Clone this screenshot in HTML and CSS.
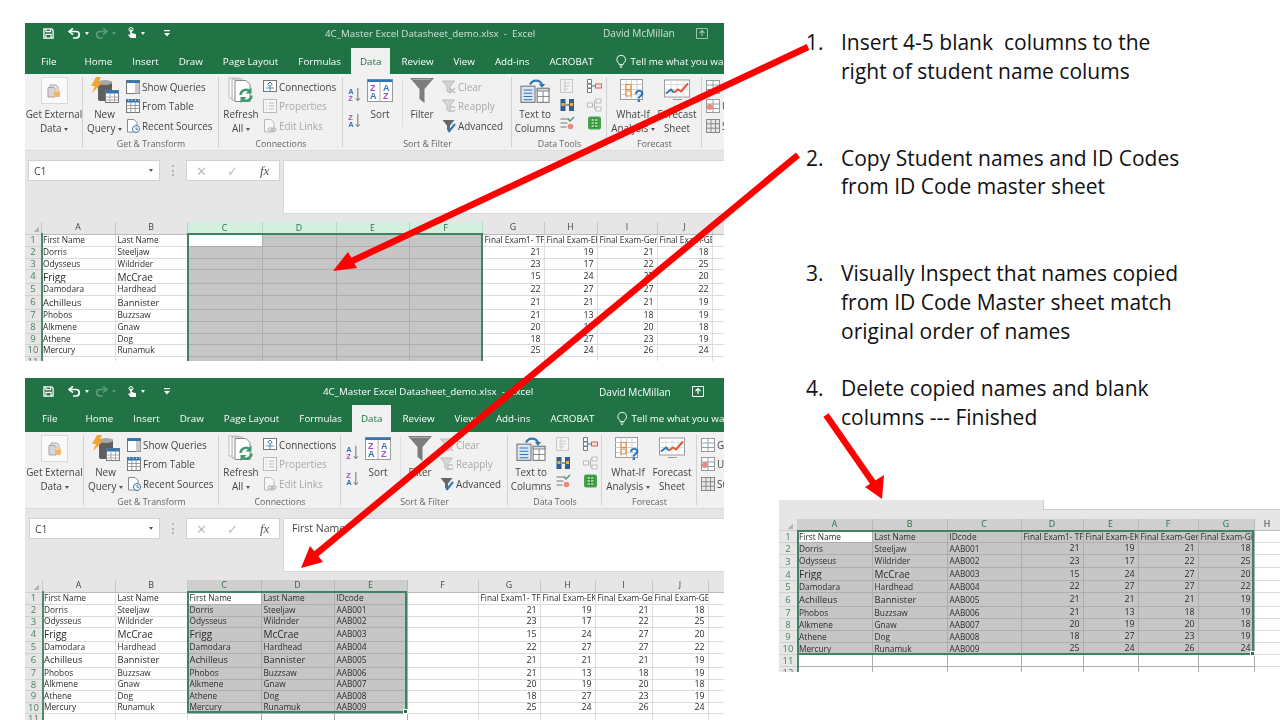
FILE: index.html
```html
<!DOCTYPE html>
<html lang="en">
<head>
<meta charset="utf-8">
<title>Merging ID codes in Excel</title>
<link rel="stylesheet" href="styles.css">
</head>
<body>
<svg class="defs" aria-hidden="true">
  <symbol id="i-save" viewBox="0 0 12 12"><path d="M1 1h8.5L11 2.5V11H1z" fill="none" stroke="#fff" stroke-width="1.4"/><path d="M3.2 1v3h5V1M3.2 11V7h5.6v4" fill="none" stroke="#fff" stroke-width="1.3"/></symbol>
  <symbol id="i-undo" viewBox="0 0 13 11"><path d="M1.5 3.5h6.5a3 3 0 0 1 0 6.5H5" fill="none" stroke="#fff" stroke-width="1.7"/><path d="M5 .3 1 3.5 5 6.7" fill="none" stroke="#fff" stroke-width="1.6"/></symbol>
  <symbol id="i-redo" viewBox="0 0 13 11"><path d="M11.5 3.5H5a3 3 0 0 0 0 6.5h3" fill="none" stroke="#5f9c7c" stroke-width="1.7"/><path d="M8 .3l4 3.2-4 3.2" fill="none" stroke="#5f9c7c" stroke-width="1.6"/></symbol>
  <symbol id="i-touch" viewBox="0 0 10 12"><circle cx="4" cy="2.5" r="2" fill="none" stroke="#fff"/><path d="M3.2 2.5h1.600v3.600L9 7.200V11H3.500L1 8l1-.8 1.200 1z" fill="#fff"/></symbol>
  <symbol id="i-more" viewBox="0 0 6 7"><path d="M0 0h6v1.300H0zM0 3h6L3 6.500z" fill="#fff"/></symbol>
  <symbol id="i-share" viewBox="0 0 12 11"><path d="M.5.500h11v10H.500z" fill="none" stroke="#fff"/><path d="M6 8V3M3.500 5 6 2.500 8.500 5" fill="none" stroke="#fff" stroke-width="1.200"/></symbol>
  <symbol id="i-bulb" viewBox="0 0 11 15"><path d="M5.500.700a4.700 4.700 0 0 0-2.700 8.500c.5.400.7 1 .7 1.700h4.400c0-.7.200-1.300.7-1.700A4.700 4.700 0 0 0 5.500.700zM3.800 12.400h3.400M4.500 14h2" fill="none" stroke="#fff"/></symbol>
  <symbol id="i-ext" viewBox="0 0 14 15"><path d="M3 2h6l2 2v4H3z" fill="#e3e3e3" stroke="#aaa"/><path d="M1 4.500h6l1 1V14H1z" fill="#d6d6d6" stroke="#a5a5a5"/><rect x="7" y="7" width="6" height="7" rx="1.500" fill="#f0b56a"/><ellipse cx="10" cy="7.500" rx="3" ry="1.300" fill="#f7d5a5"/></symbol>
  <symbol id="i-query" viewBox="0 0 30 27"><rect x="8" y="4" width="14" height="20" rx="2" fill="#5f5f5f"/><ellipse cx="15" cy="5.500" rx="7" ry="2.500" fill="#a8a8a8"/><path d="M6 0h5L8 6h4L2 16l3-7H1z" fill="#f1a62b"/><rect x="15.500" y="13.500" width="13" height="12" fill="#fff" stroke="#777"/><path d="M15.500 13.500h13v3h-13z" fill="#2f76b5"/><path d="M15.500 20h13M15.500 23h13M20 16.500v9M24.500 16.500v9" stroke="#999" stroke-width=".8"/></symbol>
  <symbol id="i-show" viewBox="0 0 14 14"><rect x=".5" y=".5" width="13" height="13" fill="#fff" stroke="#777"/><path d="M.5.500h13v2.500H.500z" fill="#2f76b5"/><path d="M9 3h4.500v10.500H9z" fill="#c9c9c9"/></symbol>
  <symbol id="i-table" viewBox="0 0 14 14"><rect x=".5" y=".5" width="13" height="13" fill="#fff" stroke="#777"/><path d="M.5.500h13v3H.500z" fill="#2f76b5"/><path d="M.5 6.500h13M.5 9.500h13M4.800 3v10.500M9.200 3v10.500" stroke="#888" stroke-width=".8"/><path d="M2 1.200h1M5.500 1.200h1M9 1.200h1M12 1.200h1" stroke="#fff"/></symbol>
  <symbol id="i-recent" viewBox="0 0 14 14"><path d="M1.500.500h6.500l3 3V13h-9.500z" fill="#fff" stroke="#888"/><circle cx="10" cy="10" r="3.500" fill="#fff" stroke="#2f76b5"/><path d="M10 8v2.200h2" fill="none" stroke="#2f76b5"/></symbol>
  <symbol id="i-refresh" viewBox="0 0 27 27"><path d="M1.500 1h10v20h-10z" fill="#fff" stroke="#bbb"/><path d="M4.500 2h10v21h-10z" fill="#f8f8f8" stroke="#aaa"/><path d="M7.500 3.500h11l4 4v17h-15z" fill="#fff" stroke="#888"/><path d="M13 18a5.500 5.500 0 0 1 9.500-3.500M24 18.500a5.500 5.500 0 0 1-9.500 3.500" fill="none" stroke="#3e9a6b" stroke-width="2.500"/><path d="M24 10.500v6h-6zM13 26v-6h6z" fill="#3e9a6b"/></symbol>
  <symbol id="i-conn" viewBox="0 0 14 14"><rect x=".5" y=".5" width="13" height="11" fill="#fff" stroke="#777"/><path d="M7 2l2.200 2.200L7 6.500 4.800 4.200z" fill="#fff" stroke="#2f76b5"/><path d="M3 8h8M7 6.500V11" stroke="#2f76b5" stroke-width=".8"/></symbol>
  <symbol id="i-props" viewBox="0 0 14 14"><rect x=".5" y=".5" width="13" height="13" fill="#f6f6f6" stroke="#bbb"/><path d="M3 4h1M6 4h5M3 7h1M6 7h5M3 10h1M6 10h5" stroke="#bbb"/></symbol>
  <symbol id="i-links" viewBox="0 0 14 14"><path d="M1.500.500h6.500l3 3V13h-9.500z" fill="#f6f6f6" stroke="#bbb"/><rect x="5" y="9" width="4.500" height="3" rx="1.500" fill="#f1f1f1" stroke="#aaa"/><rect x="8.500" y="9" width="4.500" height="3" rx="1.500" fill="none" stroke="#aaa"/></symbol>
  <symbol id="i-sortaz" viewBox="0 0 15 18"><text x="0" y="8" class="ico-a">A</text><text x="0" y="16.500" class="ico-z">Z</text><path d="M11.500 1v15M9 13.500l2.500 3 2.500-3" fill="none" stroke="#555"/></symbol>
  <symbol id="i-sortza" viewBox="0 0 15 18"><text x="0" y="8" class="ico-z">Z</text><text x="0" y="16.500" class="ico-a">A</text><path d="M11.500 1v15M9 13.500l2.500 3 2.500-3" fill="none" stroke="#555"/></symbol>
  <symbol id="i-sort" viewBox="0 0 26 23"><rect x=".5" y=".5" width="25" height="22" fill="#fff" stroke="#999"/><path d="M.5.500h25v2.500H.500z" fill="#2f76b5"/><path d="M13 3v19.500" stroke="#aaa"/><text x="3" y="12" class="ico-z">Z</text><text x="3" y="20" class="ico-a">A</text><text x="16" y="12" class="ico-a">A</text><text x="16" y="20" class="ico-z">Z</text></symbol>
  <symbol id="i-filter" viewBox="0 0 24 25"><path d="M0 0h24L14.500 11v14l-5-4V11z" fill="#7d7d7d"/><path d="M3 1.500h18" stroke="#aaa"/></symbol>
  <symbol id="i-clear" viewBox="0 0 14 14"><path d="M.5 1h12L8 6.500V13l-3-2V6.500z" fill="#d3d3d3" stroke="#bbb"/><path d="M8 8l5 5M13 8l-5 5" stroke="#bbb" stroke-width="1.200"/></symbol>
  <symbol id="i-reapply" viewBox="0 0 14 14"><path d="M.5 1h12L8 6.500V13l-3-2V6.500z" fill="#d8d8d8" stroke="#bbb"/><path d="M8 9a3 3 0 0 1 5 0M13 11a3 3 0 0 1-5 0" fill="none" stroke="#aebdb3" stroke-width="1.200"/></symbol>
  <symbol id="i-adv" viewBox="0 0 14 14"><path d="M.5 1h12L8 6.500V13l-3-2V6.500z" fill="#666"/><path d="M13 5 6.500 13" stroke="#2f76b5" stroke-width="2"/></symbol>
  <symbol id="i-t2c" viewBox="0 0 27 25"><rect x=".5" y="8.500" width="13" height="15" fill="#dbe7f3" stroke="#777"/><path d="M3 12h8M3 15h8M3 18h8M3 21h8" stroke="#2f76b5"/><rect x="15.500" y="10.500" width="11" height="13" fill="#fff" stroke="#777"/><path d="M15.500 10.500h11v2.500h-11zM21 13v10.500M15.500 18h11" fill="#c9dcef" stroke="#777" stroke-width=".8"/><path d="M9 7a6 6 0 0 1 11 0" fill="none" stroke="#2f76b5" stroke-width="2"/><path d="M17 6.500h6L20 10z" fill="#2f76b5"/></symbol>
  <symbol id="i-flash" viewBox="0 0 15 14"><rect x=".5" y=".5" width="12" height="13" fill="#f3f3f3" stroke="#c8c8c8"/><path d="M3 4h7M3 7h7M3 10h5M5 .5V13" stroke="#ccc"/></symbol>
  <symbol id="i-dup" viewBox="0 0 15 14"><path d="M.5 1h5v12h-5zM9 1h5v12H9z" fill="#2f5f93"/><path d="M1.500 5h3v3h-3zM10 5h3v3h-3z" fill="#e9b23c"/><path d="M6 7h3" stroke="#444"/></symbol>
  <symbol id="i-valid" viewBox="0 0 15 14"><path d="M.5 3h9M.5 7h7M.5 11h6" stroke="#777"/><path d="M8 3l2 2 4-4" fill="none" stroke="#3e9a6b" stroke-width="1.300"/><circle cx="10.500" cy="10.500" r="2.800" fill="#e98a7c"/></symbol>
  <symbol id="i-cons" viewBox="0 0 15 14"><path d="M.5.500h4v4h-4zM.5 5h4v4h-4zM.5 9.500h4v4h-4z" fill="#fff" stroke="#777"/><path d="M5 7h3" stroke="#2f76b5"/><rect x="8.500" y="5" width="6" height="4" fill="#fbe3dd" stroke="#d9614a"/></symbol>
  <symbol id="i-rel" viewBox="0 0 15 14"><rect x=".5" y="5" width="5" height="4" fill="#f6f6f6" stroke="#bbb"/><rect x="9" y="1" width="5" height="4" fill="#f6f6f6" stroke="#bbb"/><rect x="9" y="9" width="5" height="4" fill="#f6f6f6" stroke="#bbb"/><path d="M5.500 7H7.500V3H9M7.500 7v4H9" fill="none" stroke="#bbb"/></symbol>
  <symbol id="i-model" viewBox="0 0 15 14"><rect x="1" y=".5" width="13" height="13" rx="2" fill="#45a649"/><path d="M4 2.500h7v9H4zM7.500 2.500v9M4 5.500h7M4 8.500h7" fill="#9ed59f" stroke="#2b7d31" stroke-width=".8"/></symbol>
  <symbol id="i-whatif" viewBox="0 0 26 23"><rect x=".5" y=".5" width="22" height="20" fill="#fff" stroke="#999"/><path d="M.5 5.500h22M.5 10.500h22M.5 15.500h22M6 .5v20M11.500.500v20M17 .5v20" stroke="#ccc"/><path d="M6 5.500h5v5H6zM6 12h5v5H6z" fill="#fff" stroke="#e38a3a" stroke-width="1.200"/><text x="14" y="22.500" class="ico-q">?</text></symbol>
  <symbol id="i-fore" viewBox="0 0 26 22"><rect x=".5" y=".5" width="25" height="17" fill="#fff" stroke="#999"/><path d="M.5 5h25M.5 10h25M7 .5v17M13 .5v17M19 .5v17" stroke="#ddd"/><path d="M2 14l5-4 3 3" fill="none" stroke="#2f76b5" stroke-width="2"/><path d="M10 13l4-3 3 2 7-8" fill="none" stroke="#e0583a" stroke-width="2"/><path d="M9 20h9" stroke="#999"/></symbol>
  <symbol id="i-grp" viewBox="0 0 14 14"><rect x=".5" y=".5" width="13" height="13" fill="#fff" stroke="#999"/><path d="M.5 5h13M.5 9.500h13M7 .5v13" stroke="#8aa0b6"/></symbol>
  <symbol id="i-ungrp" viewBox="0 0 14 14"><rect x=".5" y=".5" width="13" height="13" fill="#fff" stroke="#999"/><path d="M.5 5h13M.5 9.500h13M7 .5v13" stroke="#8aa0b6"/><circle cx="4" cy="8" r="3" fill="#e98a7c"/></symbol>
  <symbol id="i-sub" viewBox="0 0 14 14"><rect x=".5" y=".5" width="13" height="13" fill="#e8e8e8" stroke="#888"/><path d="M.5 4.800h13M.5 9.200h13M5 .5v13M9.500.500v13" stroke="#888"/></symbol>
</svg>

<main class="slide">
  <section class="left">
    <div class="shot xl1">
      <div class="titlebar">
        <div class="qat"><svg class="q-save"><use href="#i-save"/></svg><svg class="q-ic"><use href="#i-undo"/></svg><i class="caret wh"></i><svg class="q-ic"><use href="#i-redo"/></svg><i class="caret dim"></i><svg class="q-t"><use href="#i-touch"/></svg><i class="caret wh"></i><svg class="q-m"><use href="#i-more"/></svg></div>
        <div class="doc">4C_Master Excel Datasheet_demo.xlsx &nbsp;- &nbsp;Excel</div>
        <div class="user">David McMillan</div>
        <svg class="share"><use href="#i-share"/></svg>
      </div>
      <div class="tabs">
        <span class="tab file">File</span><span class="tab">Home</span><span class="tab">Insert</span><span class="tab">Draw</span><span class="tab">Page Layout</span><span class="tab">Formulas</span><span class="tab on">Data</span><span class="tab">Review</span><span class="tab">View</span><span class="tab">Add-ins</span><span class="tab">ACROBAT</span>
        <span class="tell"><svg class="bulb"><use href="#i-bulb"/></svg>Tell me what you want to do</span>
      </div>
      <div class="ribbon">
        <div class="grp g1"><div class="gb"><div class="big w-fill"><div class="ib"><span class="extbox"><svg class="i14"><use href="#i-ext"/></svg></span></div><span>Get External</span><span>Data <i class="caret"></i></span></div></div><div class="gl">&nbsp;</div></div>
        <div class="grp g2"><div class="gb"><div class="big w43"><div class="ib"><svg class="i-q"><use href="#i-query"/></svg></div><span>New</span><span>Query <i class="caret"></i></span></div>
          <div class="smalls"><div class="sm"><svg><use href="#i-show"/></svg>Show Queries</div><div class="sm"><svg><use href="#i-table"/></svg>From Table</div><div class="sm"><svg><use href="#i-recent"/></svg>Recent Sources</div></div></div><div class="gl">Get &amp; Transform</div></div>
        <div class="grp g3"><div class="gb"><div class="big w44"><div class="ib"><svg class="i-q"><use href="#i-refresh"/></svg></div><span>Refresh</span><span>All <i class="caret"></i></span></div>
          <div class="smalls"><div class="sm"><svg><use href="#i-conn"/></svg>Connections</div><div class="sm off"><svg><use href="#i-props"/></svg>Properties</div><div class="sm off"><svg><use href="#i-links"/></svg>Edit Links</div></div></div><div class="gl">Connections</div></div>
        <div class="grp g4"><div class="gb"><div class="azs"><svg><use href="#i-sortaz"/></svg><svg><use href="#i-sortza"/></svg></div><div class="big w32"><div class="ib"><svg class="i-s"><use href="#i-sort"/></svg></div><span>Sort</span></div><i class="vsep"></i><div class="big w30"><div class="ib"><svg class="i-f"><use href="#i-filter"/></svg></div><span>Filter</span></div>
          <div class="smalls ml5"><div class="sm off"><svg><use href="#i-clear"/></svg>Clear</div><div class="sm off"><svg><use href="#i-reapply"/></svg>Reapply</div><div class="sm"><svg><use href="#i-adv"/></svg>Advanced</div></div></div><div class="gl">Sort &amp; Filter</div></div>
        <div class="grp g5"><div class="gb"><div class="big w46"><div class="ib"><svg class="i-q"><use href="#i-t2c"/></svg></div><span>Text to</span><span>Columns</span></div>
          <div class="tools"><svg><use href="#i-flash"/></svg><svg><use href="#i-cons"/></svg><svg><use href="#i-dup"/></svg><svg><use href="#i-rel"/></svg><svg><use href="#i-valid"/></svg><svg><use href="#i-model"/></svg></div></div><div class="gl">Data Tools</div></div>
        <div class="grp g6"><div class="gb"><div class="big w52"><div class="ib"><svg class="i-s"><use href="#i-whatif"/></svg></div><span>What-If</span><span>Analysis <i class="caret"></i></span></div><div class="big w36"><div class="ib"><svg class="i-s"><use href="#i-fore"/></svg></div><span>Forecast</span><span>Sheet</span></div></div><div class="gl">Forecast</div></div>
        <div class="grp g7"><div class="gb"><div class="smalls"><div class="sm"><svg><use href="#i-grp"/></svg>Group</div><div class="sm"><svg><use href="#i-ungrp"/></svg>Ungroup</div><div class="sm"><svg><use href="#i-sub"/></svg>Subtotal</div></div></div></div>
      </div>
      <div class="fbar">
        <div class="namebox">C1<i class="caret"></i></div>
        <div class="dots"></div>
        <div class="fxbox"><span class="fx-x">&#10005;</span><span class="fx-c">&#10003;</span><span class="fx-f">fx</span></div>
        <div class="formula"></div>
      </div>
      <div class="sheet">
        <table>
          <colgroup><col width="16"><col width="74"><col width="72"><col width="75" class="s"><col width="74" class="s"><col width="73" class="s"><col width="73" class="s"><col width="62"><col width="53"><col width="60"><col width="55"><col width="12"></colgroup>
          <tr class="ch"><th class="corner"></th><th>A</th><th>B</th><th class="act">C</th><th class="act">D</th><th class="act">E</th><th class="act">F</th><th>G</th><th>H</th><th>I</th><th>J</th><th></th></tr>
          <tr class="h12"><th>1</th><td>First Name</td><td>Last Name</td><td class="on"></td><td></td><td></td><td></td><td>Final Exam1- TF</td><td>Final Exam-EK</td><td>Final Exam-Ger</td><td>Final Exam-GE</td><td></td></tr>
          <tr class="h12"><th>2</th><td>Dorris</td><td>Steeljaw</td><td></td><td></td><td></td><td></td><td class="n">21</td><td class="n">19</td><td class="n">21</td><td class="n">18</td><td></td></tr>
          <tr class="h11"><th>3</th><td>Odysseus</td><td>Wildrider</td><td></td><td></td><td></td><td></td><td class="n">23</td><td class="n">17</td><td class="n">22</td><td class="n">25</td><td></td></tr>
          <tr class="h14"><th>4</th><td class="lg">Frigg</td><td class="lg">McCrae</td><td></td><td></td><td></td><td></td><td class="n">15</td><td class="n">24</td><td class="n">27</td><td class="n">20</td><td></td></tr>
          <tr class="h12"><th>5</th><td>Damodara</td><td>Hardhead</td><td></td><td></td><td></td><td></td><td class="n">22</td><td class="n">27</td><td class="n">27</td><td class="n">22</td><td></td></tr>
          <tr class="h14"><th>6</th><td class="md">Achilleus</td><td class="md">Bannister</td><td></td><td></td><td></td><td></td><td class="n">21</td><td class="n">21</td><td class="n">21</td><td class="n">19</td><td></td></tr>
          <tr class="h12"><th>7</th><td>Phobos</td><td>Buzzsaw</td><td></td><td></td><td></td><td></td><td class="n">21</td><td class="n">13</td><td class="n">18</td><td class="n">19</td><td></td></tr>
          <tr class="h12"><th>8</th><td>Alkmene</td><td>Gnaw</td><td></td><td></td><td></td><td></td><td class="n">20</td><td class="n">19</td><td class="n">20</td><td class="n">18</td><td></td></tr>
          <tr class="h11"><th>9</th><td>Athene</td><td>Dog</td><td></td><td></td><td></td><td></td><td class="n">18</td><td class="n">27</td><td class="n">23</td><td class="n">19</td><td></td></tr>
          <tr class="h12"><th>10</th><td>Mercury</td><td>Runamuk</td><td></td><td></td><td></td><td></td><td class="n">25</td><td class="n">24</td><td class="n">26</td><td class="n">24</td><td></td></tr>
          <tr class="h12"><th>11</th><td></td><td></td><td></td><td></td><td></td><td></td><td></td><td></td><td></td><td></td><td></td></tr>
        </table>
        <div class="rowline"></div>
        <div class="selbox sb1"></div>
      </div>
    </div>

    <div class="shot xl2">
      <div class="titlebar">
        <div class="qat"><svg class="q-save"><use href="#i-save"/></svg><svg class="q-ic"><use href="#i-undo"/></svg><i class="caret wh"></i><svg class="q-ic"><use href="#i-redo"/></svg><i class="caret dim"></i><svg class="q-t"><use href="#i-touch"/></svg><i class="caret wh"></i><svg class="q-m"><use href="#i-more"/></svg></div>
        <div class="doc">4C_Master Excel Datasheet_demo.xlsx &nbsp;- &nbsp;Excel</div>
        <div class="user">David McMillan</div>
        <svg class="share"><use href="#i-share"/></svg>
      </div>
      <div class="tabs">
        <span class="tab file">File</span><span class="tab">Home</span><span class="tab">Insert</span><span class="tab">Draw</span><span class="tab">Page Layout</span><span class="tab">Formulas</span><span class="tab on">Data</span><span class="tab">Review</span><span class="tab">View</span><span class="tab">Add-ins</span><span class="tab">ACROBAT</span>
        <span class="tell"><svg class="bulb"><use href="#i-bulb"/></svg>Tell me what you want to do</span>
      </div>
      <div class="ribbon">
        <div class="grp g1"><div class="gb"><div class="big w-fill"><div class="ib"><span class="extbox"><svg class="i14"><use href="#i-ext"/></svg></span></div><span>Get External</span><span>Data <i class="caret"></i></span></div></div><div class="gl">&nbsp;</div></div>
        <div class="grp g2"><div class="gb"><div class="big w43"><div class="ib"><svg class="i-q"><use href="#i-query"/></svg></div><span>New</span><span>Query <i class="caret"></i></span></div>
          <div class="smalls"><div class="sm"><svg><use href="#i-show"/></svg>Show Queries</div><div class="sm"><svg><use href="#i-table"/></svg>From Table</div><div class="sm"><svg><use href="#i-recent"/></svg>Recent Sources</div></div></div><div class="gl">Get &amp; Transform</div></div>
        <div class="grp g3"><div class="gb"><div class="big w44"><div class="ib"><svg class="i-q"><use href="#i-refresh"/></svg></div><span>Refresh</span><span>All <i class="caret"></i></span></div>
          <div class="smalls"><div class="sm"><svg><use href="#i-conn"/></svg>Connections</div><div class="sm off"><svg><use href="#i-props"/></svg>Properties</div><div class="sm off"><svg><use href="#i-links"/></svg>Edit Links</div></div></div><div class="gl">Connections</div></div>
        <div class="grp g4"><div class="gb"><div class="azs"><svg><use href="#i-sortaz"/></svg><svg><use href="#i-sortza"/></svg></div><div class="big w32"><div class="ib"><svg class="i-s"><use href="#i-sort"/></svg></div><span>Sort</span></div><i class="vsep"></i><div class="big w30"><div class="ib"><svg class="i-f"><use href="#i-filter"/></svg></div><span>Filter</span></div>
          <div class="smalls ml5"><div class="sm off"><svg><use href="#i-clear"/></svg>Clear</div><div class="sm off"><svg><use href="#i-reapply"/></svg>Reapply</div><div class="sm"><svg><use href="#i-adv"/></svg>Advanced</div></div></div><div class="gl">Sort &amp; Filter</div></div>
        <div class="grp g5"><div class="gb"><div class="big w46"><div class="ib"><svg class="i-q"><use href="#i-t2c"/></svg></div><span>Text to</span><span>Columns</span></div>
          <div class="tools"><svg><use href="#i-flash"/></svg><svg><use href="#i-cons"/></svg><svg><use href="#i-dup"/></svg><svg><use href="#i-rel"/></svg><svg><use href="#i-valid"/></svg><svg><use href="#i-model"/></svg></div></div><div class="gl">Data Tools</div></div>
        <div class="grp g6"><div class="gb"><div class="big w52"><div class="ib"><svg class="i-s"><use href="#i-whatif"/></svg></div><span>What-If</span><span>Analysis <i class="caret"></i></span></div><div class="big w36"><div class="ib"><svg class="i-s"><use href="#i-fore"/></svg></div><span>Forecast</span><span>Sheet</span></div></div><div class="gl">Forecast</div></div>
        <div class="grp g7"><div class="gb"><div class="smalls"><div class="sm"><svg><use href="#i-grp"/></svg>Group</div><div class="sm"><svg><use href="#i-ungrp"/></svg>Ungroup</div><div class="sm"><svg><use href="#i-sub"/></svg>Subtotal</div></div></div></div>
      </div>
      <div class="fbar">
        <div class="namebox">C1<i class="caret"></i></div>
        <div class="dots"></div>
        <div class="fxbox"><span class="fx-x">&#10005;</span><span class="fx-c">&#10003;</span><span class="fx-f">fx</span></div>
        <div class="formula">First Name</div>
      </div>
      <div class="sheet">
        <table>
          <colgroup><col width="17"><col width="73"><col width="72"><col width="74" class="s"><col width="73" class="s"><col width="73" class="s"><col width="71"><col width="62"><col width="55"><col width="57"><col width="56"><col width="16"></colgroup>
          <tr class="ch"><th class="corner"></th><th>A</th><th>B</th><th class="act2">C</th><th class="act2">D</th><th class="act2">E</th><th>F</th><th>G</th><th>H</th><th>I</th><th>J</th><th></th></tr>
          <tr class="h12"><th>1</th><td>First Name</td><td>Last Name</td><td class="on">First Name</td><td>Last Name</td><td>IDcode</td><td></td><td>Final Exam1- TF</td><td>Final Exam-EK</td><td>Final Exam-Ger</td><td>Final Exam-GE</td><td></td></tr>
          <tr class="h12"><th>2</th><td>Dorris</td><td>Steeljaw</td><td>Dorris</td><td>Steeljaw</td><td>AAB001</td><td></td><td class="n">21</td><td class="n">19</td><td class="n">21</td><td class="n">18</td><td></td></tr>
          <tr class="h11"><th>3</th><td>Odysseus</td><td>Wildrider</td><td>Odysseus</td><td>Wildrider</td><td>AAB002</td><td></td><td class="n">23</td><td class="n">17</td><td class="n">22</td><td class="n">25</td><td></td></tr>
          <tr class="h14"><th>4</th><td class="lg">Frigg</td><td class="lg">McCrae</td><td class="lg">Frigg</td><td class="lg">McCrae</td><td>AAB003</td><td></td><td class="n">15</td><td class="n">24</td><td class="n">27</td><td class="n">20</td><td></td></tr>
          <tr class="h12"><th>5</th><td>Damodara</td><td>Hardhead</td><td>Damodara</td><td>Hardhead</td><td>AAB004</td><td></td><td class="n">22</td><td class="n">27</td><td class="n">27</td><td class="n">22</td><td></td></tr>
          <tr class="h14"><th>6</th><td class="md">Achilleus</td><td class="md">Bannister</td><td class="md">Achilleus</td><td class="md">Bannister</td><td>AAB005</td><td></td><td class="n">21</td><td class="n">21</td><td class="n">21</td><td class="n">19</td><td></td></tr>
          <tr class="h12"><th>7</th><td>Phobos</td><td>Buzzsaw</td><td>Phobos</td><td>Buzzsaw</td><td>AAB006</td><td></td><td class="n">21</td><td class="n">13</td><td class="n">18</td><td class="n">19</td><td></td></tr>
          <tr class="h11"><th>8</th><td>Alkmene</td><td>Gnaw</td><td>Alkmene</td><td>Gnaw</td><td>AAB007</td><td></td><td class="n">20</td><td class="n">19</td><td class="n">20</td><td class="n">18</td><td></td></tr>
          <tr class="h12"><th>9</th><td>Athene</td><td>Dog</td><td>Athene</td><td>Dog</td><td>AAB008</td><td></td><td class="n">18</td><td class="n">27</td><td class="n">23</td><td class="n">19</td><td></td></tr>
          <tr class="h11"><th>10</th><td>Mercury</td><td>Runamuk</td><td>Mercury</td><td>Runamuk</td><td>AAB009</td><td></td><td class="n">25</td><td class="n">24</td><td class="n">26</td><td class="n">24</td><td></td></tr>
          <tr class="h12"><th>11</th><td></td><td></td><td class="blank"></td><td class="blank"></td><td class="blank"></td><td></td><td></td><td></td><td></td><td></td><td></td></tr>
        </table>
        <div class="rowline"></div>
        <div class="selbox sb2"><i class="handle"></i></div>
      </div>
    </div>
  </section>

  <section class="right">
    <ol class="steps">
      <li class="gap2"><div>Insert 4-5 blank&nbsp; columns to the<br>right of student name colums</div></li>
      <li class="gap2"><div>Copy Student names and ID Codes<br>from ID Code master sheet</div></li>
      <li class="gap1"><div>Visually Inspect that names copied<br>from ID Code Master sheet match<br>original order of names</div></li>
      <li><div>Delete copied names and blank<br>columns --- Finished</div></li>
    </ol>
    <div class="shot xl3">
      <div class="strip"><div class="stripbox"></div></div>
      <div class="sheet">
        <table>
          <colgroup><col width="18"><col width="75" class="s"><col width="75" class="s"><col width="74" class="s"><col width="62" class="s"><col width="55" class="s"><col width="60" class="s"><col width="56" class="s"><col width="26"></colgroup>
          <tr class="ch"><th class="corner"></th><th class="act2">A</th><th class="act2">B</th><th class="act2">C</th><th class="act2">D</th><th class="act2">E</th><th class="act2">F</th><th class="act2">G</th><th class="dark">H</th></tr>
          <tr class="h12"><th>1</th><td class="on">First Name</td><td>Last Name</td><td>IDcode</td><td>Final Exam1- TF</td><td>Final Exam-EK</td><td>Final Exam-Ger</td><td>Final Exam-GE</td><td></td></tr>
          <tr class="h12"><th>2</th><td>Dorris</td><td>Steeljaw</td><td>AAB001</td><td class="n">21</td><td class="n">19</td><td class="n">21</td><td class="n">18</td><td></td></tr>
          <tr class="h13"><th>3</th><td>Odysseus</td><td>Wildrider</td><td>AAB002</td><td class="n">23</td><td class="n">17</td><td class="n">22</td><td class="n">25</td><td></td></tr>
          <tr class="h13"><th>4</th><td class="lg">Frigg</td><td class="lg">McCrae</td><td>AAB003</td><td class="n">15</td><td class="n">24</td><td class="n">27</td><td class="n">20</td><td></td></tr>
          <tr class="h12"><th>5</th><td>Damodara</td><td>Hardhead</td><td>AAB004</td><td class="n">22</td><td class="n">27</td><td class="n">27</td><td class="n">22</td><td></td></tr>
          <tr class="h14"><th>6</th><td class="md">Achilleus</td><td class="md">Bannister</td><td>AAB005</td><td class="n">21</td><td class="n">21</td><td class="n">21</td><td class="n">19</td><td></td></tr>
          <tr class="h12"><th>7</th><td>Phobos</td><td>Buzzsaw</td><td>AAB006</td><td class="n">21</td><td class="n">13</td><td class="n">18</td><td class="n">19</td><td></td></tr>
          <tr class="h12"><th>8</th><td>Alkmene</td><td>Gnaw</td><td>AAB007</td><td class="n">20</td><td class="n">19</td><td class="n">20</td><td class="n">18</td><td></td></tr>
          <tr class="h12"><th>9</th><td>Athene</td><td>Dog</td><td>AAB008</td><td class="n">18</td><td class="n">27</td><td class="n">23</td><td class="n">19</td><td></td></tr>
          <tr class="h12"><th>10</th><td>Mercury</td><td>Runamuk</td><td>AAB009</td><td class="n">25</td><td class="n">24</td><td class="n">26</td><td class="n">24</td><td></td></tr>
          <tr class="h12"><th>11</th><td class="blank"></td><td class="blank"></td><td class="blank"></td><td class="blank"></td><td class="blank"></td><td class="blank"></td><td class="blank"></td><td></td></tr>
          <tr class="h12"><th>12</th><td class="blank"></td><td class="blank"></td><td class="blank"></td><td class="blank"></td><td class="blank"></td><td class="blank"></td><td class="blank"></td><td></td></tr>
        </table>
        <div class="rowline"></div>
        <div class="selbox sb3"><i class="handle"></i></div>
      </div>
    </div>
  </section>

  <svg class="arrows" viewBox="0 0 1280 720" aria-hidden="true">
    <path class="shaft" d="M808 47 352 261"/>
    <path class="head" d="M333 271 348 252 357 268z"/>
    <path class="shaft" d="M798 155 316 554"/>
    <path class="head" d="M301 568 310 546 323 562z"/>
    <path class="shaft" d="M826 415 874 484"/>
    <path class="head" d="M882 499 865 487 884 475z"/>
  </svg>
</main>
</body>
</html>
```
FILE: styles.css
```css
* { box-sizing: border-box; }
html, body { margin: 0; padding: 0; background: #fff; }
.defs { position: absolute; width: 0; height: 0; overflow: hidden; }
.ico-a { font: 700 9px "Liberation Sans", sans-serif; fill: #2f76b5; }
.ico-z { font: 700 9px "Liberation Sans", sans-serif; fill: #a24fc4; }
.ico-q { font: 700 17px "Liberation Sans", sans-serif; fill: #2f76b5; }

.slide { position: relative; display: flex; width: 1280px; height: 720px; overflow: hidden; font-family: "Open Sans", "Noto Sans", sans-serif; }
.left { width: 779px; flex: none; display: flex; flex-direction: column; gap: 17px; padding: 23px 0 0 25px; }
.right { flex: 1; min-width: 0; padding-top: 28px; }

/* Pasted screenshots */
.shot { width: 699px; overflow: hidden; background: #e6e6e6; filter: blur(.3px); flex: none; }
.xl1 { height: 338px; }
.xl2 { height: 342px; }
.xl3 { width: 501px; height: 172px; margin-top: 68px; }

.titlebar { display: flex; align-items: center; height: 25px; padding-bottom: 5px; background: #217346; color: #fff; }
.xl2 .titlebar { height: 27px; padding-bottom: 0; }
.qat { display: flex; align-items: center; width: 300px; flex: none; padding-left: 18px; }
.xl2 .qat { width: 298px; }
.qat svg { flex: none; }
.q-save { width: 11px; height: 11px; margin-right: 14px; }
.q-ic { width: 13px; height: 11px; }
.q-t { width: 10px; height: 12px; margin-left: 5px; }
.q-m { width: 6px; height: 7px; margin-left: 13px; }
.caret { display: inline-block; width: 0; height: 0; border: 2.500px solid transparent; border-top: 3px solid #555; border-bottom: 0; vertical-align: middle; }
.qat .caret { margin: 0 6px 0 4px; }
.caret.wh { border-top-color: #fff; }
.caret.dim { border-top-color: #5f9c7c; }
.doc { width: 278px; flex: none; font-size: 9.800px; color: #cfe0d6; white-space: nowrap; }
.user { width: 93px; flex: none; font-size: 10.100px; color: #cfe0d6; white-space: nowrap; }
.xl2 .doc { width: 276px; color: #fff; }
.xl2 .user { color: #fff; }
.share { width: 12px; height: 11px; opacity: .55; }
.xl2 .share { opacity: 1; }

.tabs { display: flex; align-items: stretch; height: 26px; padding-left: 6px; background: #217346; color: #fff; font-size: 9.800px; white-space: nowrap; overflow: hidden; }
.xl2 .tabs { height: 27px; padding-left: 7px; }
.tab { display: flex; align-items: center; padding: 0 10px; }
.tab.file { padding-right: 18px; }
.tab.on { background: #f1f1f1; color: #217346; padding: 0 9px; margin: 0 1px 0 0; }
.tell { display: flex; align-items: center; margin-left: 13px; }
.bulb { width: 10px; height: 15px; margin-right: 4px; flex: none; }

.ribbon { display: flex; height: 77px; background: #f1f1f1; border-bottom: 1px solid #dcdcdc; overflow: hidden; color: #444; font-size: 9.900px; line-height: 14px; white-space: nowrap; }
.grp { flex: none; display: flex; flex-direction: column; position: relative; }
.grp::after { content: ""; position: absolute; right: 0; top: 3px; bottom: 3px; width: 1px; background: #d2d2d2; }
.g7::after { display: none; }
.gb { display: flex; height: 64px; }
.gl { height: 12px; line-height: 13px; text-align: center; font-size: 8.800px; color: #666; }
.g1 { width: 58px; } .g2 { width: 136px; } .g3 { width: 124px; } .g4 { width: 169px; } .g5 { width: 95px; } .g6 { width: 95px; } .g7 { width: 22px; padding-left: 4px; }
.xl2 .g1 { width: 59px; } .xl2 .g2 { width: 135px; } .xl2 .g3 { width: 122px; } .xl2 .g4 { width: 167px; } .xl2 .g5 { width: 94px; }

.big { display: flex; flex-direction: column; align-items: center; flex: none; }
.big > span { height: 14px; }
.ib { height: 33px; display: flex; align-items: center; justify-content: center; flex: none; }
.w-fill { width: 100%; } .w43 { width: 43px; } .w44 { width: 44px; } .w46 { width: 46px; } .w52 { width: 52px; } .w36 { width: 36px; } .w32 { width: 32px; } .w30 { width: 30px; }
.extbox { display: flex; align-items: center; justify-content: center; width: 27px; height: 27px; background: #fafafa; border: 1px solid #d9d9d9; }
.i14 { width: 14px; height: 15px; }
.i-q { width: 30px; height: 27px; }
.i-s { width: 26px; height: 23px; }
.i-f { width: 24px; height: 25px; }

.smalls { display: flex; flex-direction: column; padding-top: 3px; }
.ml5 { margin-left: 5px; }
.sm { display: flex; align-items: center; gap: 2px; height: 19.500px; }
.sm svg { width: 14px; height: 14px; flex: none; }
.sm.off { color: #a8a8a8; }
.azs { display: flex; flex-direction: column; gap: 11px; width: 16px; margin-left: 5px; padding-top: 13px; }
.azs svg { width: 13px; height: 15px; }
.vsep { width: 1px; height: 48px; margin: 5px 4px 0 6px; background: #dedede; flex: none; }
.tools { display: grid; grid-template-columns: 15px 15px; column-gap: 12px; row-gap: 4.500px; padding: 5px 0 0 2px; align-content: start; }
.tools svg { width: 15px; height: 14px; }

.fbar { display: flex; height: 71px; padding: 9px 0 0 3px; background: #e6e6e6; font-size: 10.500px; color: #444; }
.xl2 .fbar { padding-left: 4px; }
.namebox { display: flex; align-items: center; justify-content: space-between; width: 132px; height: 21px; padding: 0 6px 0 5px; background: #fff; border: 1px solid #d2d2d2; flex: none; }
.xl2 .namebox { width: 131px; }
.dots { display: flex; justify-content: center; width: 26px; height: 21px; padding: 5px 0; flex: none; }
.dots::before { content: ""; border-left: 2px dotted #b5b5b5; }
.fxbox { display: flex; align-items: center; width: 94px; height: 21px; padding-left: 9px; background: #fff; border: 1px solid #d2d2d2; flex: none; }
.fx-x, .fx-c { width: 31px; color: #bcbcbc; font-size: 13px; }
.fx-f { margin-left: 2px; font: italic 13px "Liberation Serif", serif; color: #555; }
.formula { flex: 1; height: 54px; margin-left: 3px; padding: 2px 8px; background: #fff; border: 1px solid #d8d8d8; border-right: 0; }

.sheet { position: relative; background: #fff; }
table { table-layout: fixed; border-collapse: collapse; width: 100%; font-size: 8.300px; line-height: 1; color: #2b2b2b; }
th, td { padding: 0; overflow: hidden; white-space: nowrap; font-weight: 400; }
td { padding: 0 2px; border-right: 1px solid #dedede; border-bottom: 1px solid #dcdcdc; }
.xl1 td { padding-top: 1px; }
td.n { text-align: right; padding-right: 3px; font-size: 8.800px; }
td.lg { font-size: 10px; }
td.md { font-size: 9.300px; }
td.on, td.blank { background: #fff; }
col.s { background: #c6c6c6; }
.xl1 td:nth-child(n+4):nth-child(-n+7),
.xl2 td:nth-child(n+4):nth-child(-n+6),
.xl3 td:nth-child(n+2):nth-child(-n+8) { border-color: #adadad; }
.xl2 tr:last-child td, .xl3 tr:nth-last-child(-n+2) td { border-color: #dedede; }
.h11 { height: 11px; } .h12 { height: 12px; } .h13 { height: 13px; } .h14 { height: 14px; }
tr > th:first-child { background: #e6e6e6; color: #4f7f66; font-size: 9.500px; border-bottom: 1px solid #d0d0d0; text-align: center; }
.ch { height: 12px; }
.ch th { background: #e6e6e6; color: #444; font-size: 8.800px; text-align: center; border-right: 1px solid #c8c8c8; border-bottom: 1px solid #bbb; }
.ch th.corner { background: linear-gradient(135deg, #e6e6e6 62%, #b4b4b4 63%) no-repeat 7px 3px / 7px 7px, #e6e6e6; }
.ch th.act { background: #d3efdf; color: #217346; border-right-color: #b9d8c6; border-bottom: 0; }
.ch th.act2 { background: #cfcfcf; color: #217346; border-right-color: #b8b8b8; }
.ch th.dark { color: #333; }
.rowline { position: absolute; left: 16px; top: 11px; bottom: 0; width: 2px; background: #4d8a69; }
.xl2 .rowline { left: 17px; }
.xl3 .rowline { left: 18px; }
.selbox { position: absolute; border: 2px solid #3f8461; }
.sb1 { left: 162px; top: 11px; width: 296px; height: 140px; }
.sb2 { left: 162px; top: 11px; width: 220px; height: 122px; }
.sb3 { left: 18px; top: 11px; width: 457px; height: 125px; }
.handle { position: absolute; right: -3px; bottom: -3px; width: 5px; height: 5px; background: #217346; border: 1px solid #fff; }
.strip { display: flex; justify-content: flex-end; height: 19px; }
.stripbox { width: 237px; height: 10px; background: #fff; border-left: 1px solid #ccc; border-bottom: 1px solid #ccc; }

/* Steps */
.steps { list-style: none; margin: 0 0 0 27px; padding: 0; counter-reset: step; color: #111; font-size: 21px; line-height: 28.800px; white-space: nowrap; }
.steps li { display: flex; counter-increment: step; }
.steps li::before { content: counter(step) "."; width: 35px; flex: none; }
.gap2 { margin-bottom: 58px; }
.gap1 { margin-bottom: 28.600px; }

/* Arrows drawn over the slide */
.arrows { position: absolute; left: 0; top: 0; width: 1280px; height: 720px; pointer-events: none; }
.shaft { fill: none; stroke: #f00; stroke-width: 6.500; }
.head { fill: #f00; }
```
